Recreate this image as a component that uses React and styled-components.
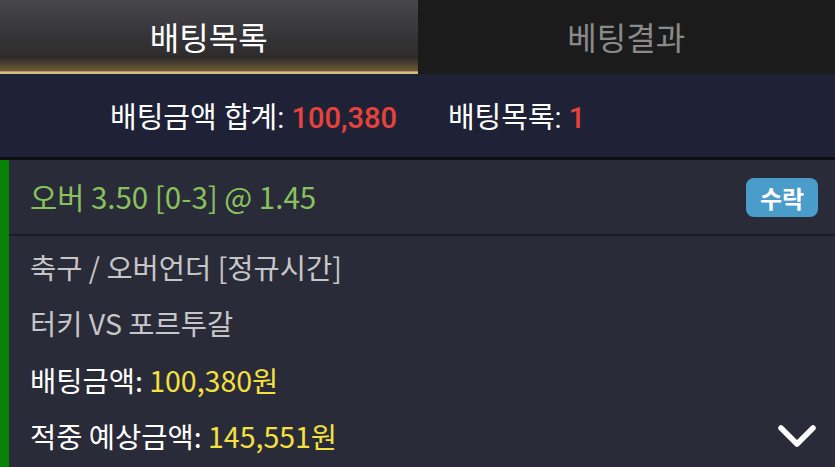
import React from 'react';
import styled, { createGlobalStyle } from 'styled-components';

const GlobalStyle = createGlobalStyle`
    html, body {
        margin: 0;
        padding: 0;
        background: #2a2b38;
    }
    * {
        box-sizing: border-box;
    }
`;

const tabs = [
    { label: '배팅목록', active: true },
    { label: '베팅결과', active: false },
];

const App = () => {
    return (
        <Page>
            <GlobalStyle />
            <TabBar>
                {tabs.map(tab => (
                    <Tab key={tab.label} active={tab.active}>{tab.label}</Tab>
                ))}
            </TabBar>
            <Summary>
                <SummaryItem>
                    배팅금액 합계: <Red>100,380</Red>
                </SummaryItem>
                <SummaryItem>
                    배팅목록: <Red>1</Red>
                </SummaryItem>
            </Summary>
            <Card>
                <CardHeader>
                    <Title>오버 3.50 [0-3] @ 1.45</Title>
                    <Badge>수락</Badge>
                </CardHeader>
                <CardBody>
                    <Row muted><span>축구 / 오버언더 [정규시간]</span></Row>
                    <Row muted><span>터키 VS 포르투갈</span></Row>
                    <Row><span>배팅금액: <Yellow>100,380원</Yellow></span></Row>
                    <Row>
                        <span>적중 예상금액: <Yellow>145,551원</Yellow></span>
                        <Chevron viewBox="0 0 40 26">
                            <polyline points="4,5 20,21 36,5" />
                        </Chevron>
                    </Row>
                </CardBody>
            </Card>
        </Page>
    );
};

const Page = styled.div`
    width: 835px;
    height: 467px;
    overflow: hidden;
    display: flex;
    flex-direction: column;
    font-family: 'Noto Sans CJK KR', 'Noto Sans', sans-serif;
`;

const TabBar = styled.div`
    display: flex;
    height: 74px;
`;

const Tab = styled.div`
    flex: 1;
    display: flex;
    align-items: center;
    justify-content: center;
    padding-bottom: 2px;
    font-family: Roboto, 'Noto Sans CJK KR', sans-serif;
    font-size: 32px;
    color: ${props => props.active ? '#ffffff' : '#8a8a8a'};
    background: ${props => props.active
        ? 'linear-gradient(to bottom, #48474c 0%, #323236 55%, #2e2c2a 78%, #6e5a35 96%, #d6bd84 97%, #d6bd84 100%)'
        : '#1b1b1b'};
`;

const Summary = styled.div`
    height: 86px;
    background: #1f2236;
    border-bottom: 3px solid #0d0e14;
    display: flex;
    align-items: center;
    gap: 51px;
    padding: 0 0 2px 110px;
    font-family: Roboto, 'Noto Sans CJK KR', sans-serif;
    font-size: 29px;
    color: #ffffff;
`;

const SummaryItem = styled.div`
    white-space: nowrap;
`;

const Red = styled.span`
    color: #e8433b;
    font-weight: 500;
`;

const Card = styled.div`
    flex: 1;
    background: #2a2b38;
    border-left: 9px solid #078407;
    display: flex;
    flex-direction: column;
`;

const CardHeader = styled.div`
    height: 76px;
    display: flex;
    align-items: center;
    justify-content: space-between;
    padding: 0 17px 0 21px;
    border-bottom: 2px solid #1a1b23;
`;

const Title = styled.div`
    font-size: 29.5px;
    color: #88c25c;
    padding-bottom: 2px;
`;

const Badge = styled.div`
    width: 72px;
    height: 39px;
    border-radius: 8px;
    background: #4a9ccb;
    color: #ffffff;
    font-weight: 700;
    font-size: 24px;
    display: flex;
    align-items: center;
    justify-content: center;
`;

const CardBody = styled.div`
    padding: 2px 18px 0 21px;
    display: flex;
    flex-direction: column;
`;

const Row = styled.div`
    height: 56.5px;
    display: flex;
    align-items: center;
    justify-content: space-between;
    font-size: 28.5px;
    color: ${props => props.muted ? '#c6c6c8' : '#ffffff'};
    white-space: nowrap;
`;

const Yellow = styled.span`
    color: #f4e13f;
`;

const Chevron = styled.svg`
    width: 40px;
    height: 26px;
    fill: none;
    stroke: #ffffff;
    stroke-width: 5.5;
    stroke-linecap: round;
    stroke-linejoin: round;
`;

export default App;
